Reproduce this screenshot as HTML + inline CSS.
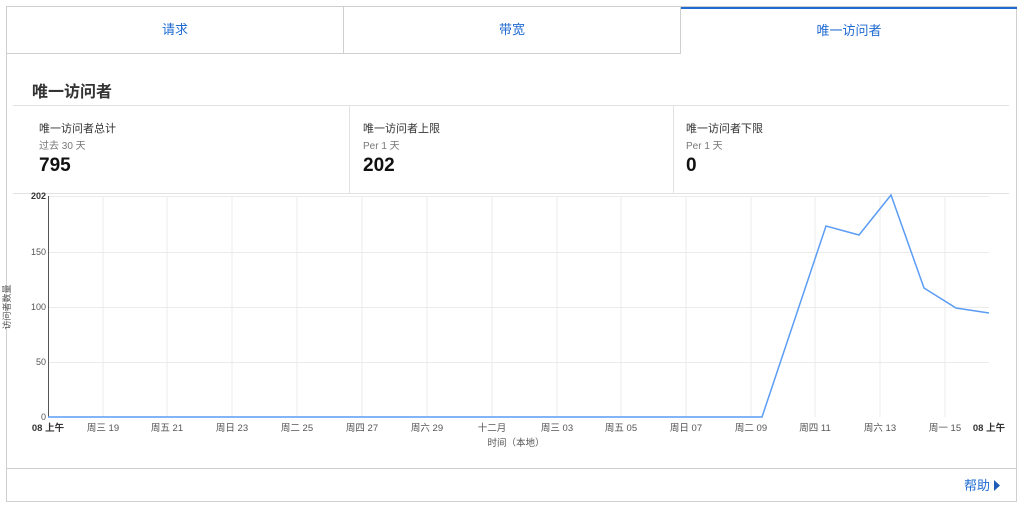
<!DOCTYPE html>
<html><head><meta charset="utf-8"><style>
*{margin:0;padding:0;box-sizing:border-box}
body{width:1024px;height:512px;background:#fff;font-family:"Liberation Sans","Noto Sans CJK SC",sans-serif;position:relative;overflow:hidden}
.card{position:absolute;left:6px;top:6px;width:1011px;height:496px;border:1px solid #cfcfcf}
.tab{position:absolute;top:0;height:47px;border-bottom:1px solid #cfcfcf;color:#1f6bd1;font-size:13px;text-align:center;line-height:46px}
.t{position:absolute;color:#333;font-size:11px}
.s{position:absolute;color:#777;font-size:10px}
.n{position:absolute;color:#111;font-size:19px;font-weight:bold}
</style></head><body>
<div class="card">
<div class="tab" style="left:0;width:337px;border-right:1px solid #cfcfcf">请求</div>
<div class="tab" style="left:337px;width:337px;border-right:1px solid #cfcfcf">带宽</div>
<div class="tab" style="left:674px;width:336px;border-bottom:none;border-top:2px solid #1f6bd1;line-height:44px">唯一访问者</div>
</div>
<div style="position:absolute;left:32px;top:78px;font-size:16px;font-weight:bold;color:#333">唯一访问者</div>
<div style="position:absolute;left:13px;top:105px;width:996px;border-top:1px solid #e2e2e2"></div>
<div style="position:absolute;left:13px;top:193px;width:996px;border-top:1px solid #e2e2e2"></div>
<div style="position:absolute;left:349px;top:105px;height:88px;border-left:1px solid #e2e2e2"></div>
<div style="position:absolute;left:673px;top:105px;height:88px;border-left:1px solid #e2e2e2"></div>
<div class="t" style="left:39px;top:120px">唯一访问者总计</div><div class="s" style="left:39px;top:137px">过去 30 天</div><div class="n" style="left:39px;top:155px">795</div>
<div class="t" style="left:363px;top:120px">唯一访问者上限</div><div class="s" style="left:363px;top:137px">Per 1 天</div><div class="n" style="left:363px;top:155px">202</div>
<div class="t" style="left:686px;top:120px">唯一访问者下限</div><div class="s" style="left:686px;top:137px">Per 1 天</div><div class="n" style="left:686px;top:155px">0</div>
<svg style="position:absolute;left:0;top:0" width="1024" height="512" font-family="Liberation Sans,Noto Sans CJK SC,sans-serif">
<g stroke="#ebebeb" stroke-width="1">
<line x1="48" y1="196.5" x2="989" y2="196.5"/><line x1="48" y1="252.5" x2="989" y2="252.5"/><line x1="48" y1="307.5" x2="989" y2="307.5"/><line x1="48" y1="362.5" x2="989" y2="362.5"/>
<g id="v"><line x1="103" y1="196" x2="103" y2="417"/><line x1="167" y1="196" x2="167" y2="417"/><line x1="232" y1="196" x2="232" y2="417"/><line x1="297" y1="196" x2="297" y2="417"/><line x1="362" y1="196" x2="362" y2="417"/><line x1="427" y1="196" x2="427" y2="417"/><line x1="492" y1="196" x2="492" y2="417"/><line x1="557" y1="196" x2="557" y2="417"/><line x1="621" y1="196" x2="621" y2="417"/><line x1="686" y1="196" x2="686" y2="417"/><line x1="751" y1="196" x2="751" y2="417"/><line x1="815" y1="196" x2="815" y2="417"/><line x1="880" y1="196" x2="880" y2="417"/><line x1="945" y1="196" x2="945" y2="417"/></g>
</g>
<line x1="48.5" y1="196" x2="48.5" y2="417" stroke="#555"/>
<polyline fill="none" stroke="#5b9cf5" stroke-width="1.5" points="48,417 762,417 826,226 859,235 891,195 924,288 956,308 989,313"/>
<g font-size="9" fill="#555" text-anchor="end"><text x="46" y="199" font-weight="bold" fill="#333">202</text><text x="46" y="255">150</text><text x="46" y="310">100</text><text x="46" y="365">50</text><text x="46" y="420">0</text></g>
<g font-size="9.5" fill="#555" text-anchor="middle">
<text x="48" y="431" font-weight="bold" fill="#333">08 上午</text><text x="103" y="431">周三 19</text><text x="167" y="431">周五 21</text><text x="232" y="431">周日 23</text><text x="297" y="431">周二 25</text><text x="362" y="431">周四 27</text><text x="427" y="431">周六 29</text><text x="492" y="431">十二月</text><text x="557" y="431">周三 03</text><text x="621" y="431">周五 05</text><text x="686" y="431">周日 07</text><text x="751" y="431">周二 09</text><text x="815" y="431">周四 11</text><text x="880" y="431">周六 13</text><text x="945" y="431">周一 15</text><text x="989" y="431" font-weight="bold" fill="#333">08 上午</text>
<text x="516" y="446">时间（本地）</text>
</g>
<text transform="translate(10,307) rotate(-90)" font-size="9" fill="#555" text-anchor="middle">访问者数量</text>
<line x1="7" y1="468.5" x2="1016" y2="468.5" stroke="#cfcfcf"/>
<text x="964" y="490" font-size="13" fill="#1f6bd1">帮助</text>
<polygon points="994,480 1000,485.5 994,491" fill="#1f5bb8"/>
</svg>
</body></html>
